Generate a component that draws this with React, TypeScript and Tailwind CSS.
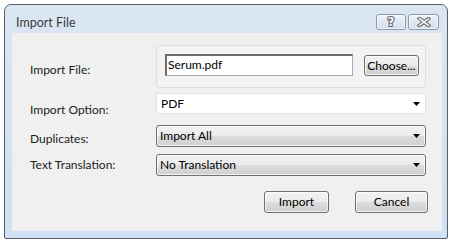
import React from "react";

function Arrow() {
  return (
    <svg width="7" height="4" viewBox="0 0 7 4" className="block">
      <path d="M0 0 H7 L3.5 4 Z" fill="#000" />
    </svg>
  );
}

const winBtn =
  "rounded-[3px] border border-[#8b98a8] bg-gradient-to-b from-[#eef3f9] via-[#dfe8f2] to-[#d3deea] shadow-[inset_0_0_0_1px_rgba(255,255,255,0.6)] flex items-center justify-center";

const w7btn =
  "border border-[#707070] rounded-[3px] bg-[linear-gradient(to_bottom,#f2f2f2_0%,#ebebeb_50%,#dddddd_51%,#cfcfcf_100%)] shadow-[inset_0_0_0_1px_rgba(255,255,255,0.7)]";

export default function App() {
  return (
    <div className="w-[455px] h-[243px] bg-white pt-[4px] pl-[4px] font-['Lato','Liberation_Sans',sans-serif] text-[12px] text-[#1b1b1b]">
      <div className="w-[444px] h-[235px] rounded-t-[7px] rounded-b-[2px] border border-[#585e66] bg-gradient-to-b from-[#dbe6f3] to-[#cfe0f2] flex flex-col">
        {/* title bar */}
        <div className="h-[28px] flex items-start pl-[11px] pr-[8px]">
          <div className="pt-[10px] leading-[15px] text-[12.5px] text-[#3b3b3b]">Import File</div>
          <div className="ml-auto mt-[9px] flex gap-[2px]">
            <div className={`${winBtn} w-[30px] h-[16px]`}>
              <span className="text-[12px] leading-[12px] font-bold text-[#f6f8fa] [-webkit-text-stroke:2px_#5e6166] [paint-order:stroke_fill] font-['DejaVu_Sans',sans-serif]">
                ?
              </span>
            </div>
            <div className={`${winBtn} w-[31px] h-[16px]`}>
              <svg width="14" height="10" viewBox="0 0 14 10">
                <path d="M2.5 1.5 L11.5 8.5 M11.5 1.5 L2.5 8.5" stroke="#5c5c5c" strokeWidth="3.6" strokeLinecap="square" />
                <path d="M2.5 1.5 L11.5 8.5 M11.5 1.5 L2.5 8.5" stroke="#f4f6f8" strokeWidth="1.6" strokeLinecap="square" />
              </svg>
            </div>
          </div>
        </div>
        {/* client area */}
        <div className="ml-[7px] mr-[5px] h-[198px] bg-[#f0f0f0] pl-[18px] pr-[16px] pt-[12px]">
          {/* Import File row */}
          <div className="flex items-start h-[43px]">
            <div className="w-[126px] pt-[17px] leading-[16px]">Import File:</div>
            <div className="w-[270px] h-[43px] border border-[#dedede] rounded-[3px] bg-[#f3f3f3] flex items-start pl-[8px] pt-[8px]">
              <div className="w-[188px] h-[22px] bg-white border border-[#a9a9a9] border-t-[#6d6d6d] border-l-[#6d6d6d] border-t-2 border-l-2 pl-[1px] leading-[18px] text-black">
                Serum.pdf
              </div>
              <div className={`${w7btn} ml-[11px] mt-[1px] w-[55px] h-[21px] flex items-center justify-center leading-[16px] text-black`}>
                Choose...
              </div>
            </div>
          </div>
          {/* Import Option */}
          <div className="flex items-start mt-[5px] h-[21px]">
            <div className="w-[126px] pt-[9px] leading-[16px]">Import Option:</div>
            <div className="w-[270px] h-[21px] bg-white border border-[#e4e4e4] rounded-[2px] flex items-center pl-[4px] pr-[5px] text-black">
              <span className="leading-[16px]">PDF</span>
              <span className="ml-auto">
                <Arrow />
              </span>
            </div>
          </div>
          {/* Duplicates */}
          <div className="flex items-start mt-[11px] h-[22px]">
            <div className="w-[126px] pt-[6px] leading-[16px]">Duplicates:</div>
            <div className={`${w7btn} w-[270px] h-[22px] flex items-center pl-[3px] pr-[5px] text-black`}>
              <span className="leading-[16px]">Import All</span>
              <span className="ml-auto">
                <Arrow />
              </span>
            </div>
          </div>
          {/* Text Translation */}
          <div className="flex items-start mt-[7px] h-[22px]">
            <div className="w-[126px] pt-[3px] leading-[16px]">Text Translation:</div>
            <div className={`${w7btn} w-[270px] h-[22px] flex items-center pl-[3px] pr-[5px] text-black`}>
              <span className="leading-[16px]">No Translation</span>
              <span className="ml-auto">
                <Arrow />
              </span>
            </div>
          </div>
          {/* buttons */}
          <div className="flex justify-end mt-[15px] gap-[26px] -mr-[2px]">
            <div className={`${w7btn} w-[65px] h-[22px] flex items-center justify-center leading-[16px] text-black`}>
              Import
            </div>
            <div className={`${w7btn} w-[73px] h-[22px] flex items-center justify-center leading-[16px] text-black`}>
              Cancel
            </div>
          </div>
        </div>
      </div>
    </div>
  );
}
